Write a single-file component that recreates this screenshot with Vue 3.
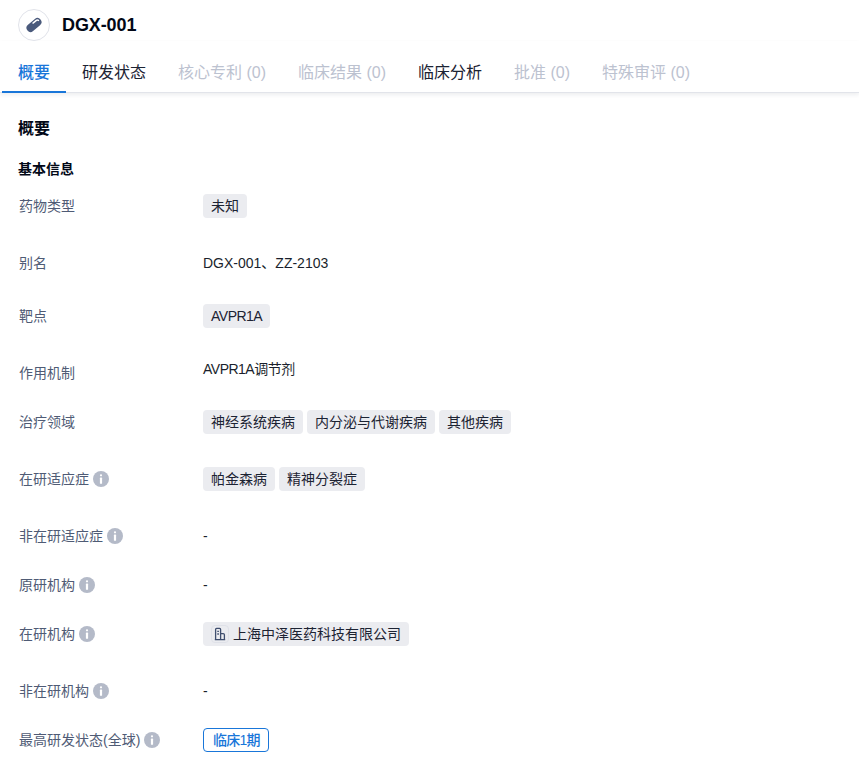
<script setup>
const tabs = [
  { label: '概要', state: 'active' },
  { label: '研发状态', state: '' },
  { label: '核心专利 (0)', state: 'off' },
  { label: '临床结果 (0)', state: 'off' },
  { label: '临床分析', state: '' },
  { label: '批准 (0)', state: 'off' },
  { label: '特殊审评 (0)', state: 'off' }
]
const rows = [
  { label: '药物类型', size: 'tall', tags: ['未知'] },
  { label: '别名', size: 'mid', text: 'DGX-001、ZZ-2103' },
  { label: '靶点', size: 'tall', tags: ['AVPR1A'], tight: true },
  { label: '作用机制', size: 'base', text: 'AVPR1A调节剂', raised: true },
  { label: '治疗领域', size: 'tall', tags: ['神经系统疾病', '内分泌与代谢疾病', '其他疾病'] },
  { label: '在研适应症', info: true, size: 'tall', tags: ['帕金森病', '精神分裂症'] },
  { label: '非在研适应症', info: true, size: 'base', text: '-' },
  { label: '原研机构', info: true, size: 'base', text: '-' },
  { label: '在研机构', info: true, size: 'tall', org: '上海中泽医药科技有限公司' },
  { label: '非在研机构', info: true, size: 'base', text: '-' },
  { label: '最高研发状态(全球)', info: true, size: 'base', status: '临床1期' }
]
</script>

<template>
  <div class="page">
    <header class="head">
      <span class="avatar">
        <svg width="20" height="20" viewBox="0 0 20 20">
          <g transform="rotate(-40 10 10)">
            <rect x="1.5" y="6" width="17" height="8" rx="4" fill="#4a5a7c" />
            <path d="M10.5 7.9h3.9a2.1 2.1 0 0 1 2 1.4" fill="none" stroke="#fff" stroke-width="1.5" stroke-linecap="round" />
          </g>
        </svg>
      </span>
      <h1 class="name">DGX-001</h1>
    </header>
    <nav class="tabs">
      <span v-for="t in tabs" :key="t.label" class="tab" :class="t.state">{{ t.label }}</span>
    </nav>
    <main class="body">
      <h2 class="title">概要</h2>
      <h3 class="sub">基本信息</h3>
      <div class="list">
        <div v-for="r in rows" :key="r.label" class="row" :class="r.size">
          <div class="label">
            <span>{{ r.label }}</span>
            <svg v-if="r.info" class="info" width="16" height="16" viewBox="0 0 16 16">
              <circle cx="8" cy="8" r="8" fill="#b4bac8" />
              <rect x="6.9" y="3.2" width="2.2" height="2.2" rx="1.1" fill="#fff" />
              <rect x="6.9" y="6.6" width="2.2" height="6.2" rx=".6" fill="#fff" />
            </svg>
          </div>
          <div class="value">
            <template v-if="r.tags">
              <span v-for="t in r.tags" :key="t" class="tag" :class="{ tight: r.tight }">{{ t }}</span>
            </template>
            <span v-else-if="r.org" class="tag org">
              <span class="org-icon">
                <svg width="12" height="14" viewBox="0 0 12 14" fill="none" stroke="#3f4e6e" stroke-width="1.3">
                  <path d="M1.6 12.6V2.4c0-.6.4-1 1-1h3c.6 0 1 .4 1 1v10.2M6.6 6.6h2.6c.7 0 1.2.5 1.2 1.2v4.8M.8 12.6h10.4M3.3 4.4h1.6M3.3 7h1.6" />
                </svg>
              </span>
              {{ r.org }}
            </span>
            <span v-else-if="r.status" class="status">{{ r.status }}</span>
            <span v-else class="plain" :class="{ raised: r.raised }">{{ r.text }}</span>
          </div>
        </div>
      </div>
    </main>
  </div>
</template>

<style>
html, body { margin: 0; background: #fff; }
</style>

<style scoped>
.page {
  width: 859px;
  height: 774px;
  overflow: hidden;
  font-family: "Liberation Sans", "Noto Sans CJK SC", sans-serif;
  color: #020817;
}
.head {
  display: flex;
  align-items: center;
  gap: 12px;
  height: 32px;
  padding: 9px 18px 0;
}
.avatar {
  width: 30px;
  height: 30px;
  border: 1px solid #e1e3ea;
  border-radius: 50%;
  display: flex;
  align-items: center;
  justify-content: center;
}
.name {
  margin: 0;
  font-size: 18px;
  line-height: 32px;
  font-weight: 700;
  letter-spacing: -.1px;
}
.tabs {
  display: flex;
  padding: 0 2px;
  height: 51px;
  border-bottom: 1px solid #e2e4ea;
  box-shadow: 0 2px 4px rgba(30, 40, 70, .08);
}
.tab {
  padding: 20px 16px 0;
  font-size: 16px;
  line-height: 24px;
  height: 32px;
  color: #1c2333;
  white-space: nowrap;
}
.tab.off { color: #bcc2d0; }
.tab.active {
  color: #1976d9;
  font-weight: 500;
  border-bottom: 2px solid #1976d9;
  height: 30px;
}
.body { padding: 24px 18px 0; }
.title {
  margin: 0;
  font-size: 16px;
  line-height: 24px;
  font-weight: 600;
}
.sub {
  margin: 16px 0 0;
  font-size: 14px;
  line-height: 24px;
  font-weight: 600;
}
.list { margin-top: 12px; }
.row { display: flex; }
.row.tall { height: 57px; }
.row.mid { height: 53px; }
.row.base { height: 49px; }
.label {
  width: 184px;
  padding-left: 1px;
  flex: none;
  display: flex;
  align-items: center;
  gap: 4px;
  height: 24px;
  font-size: 14px;
  color: #4f5b75;
  white-space: nowrap;
}
.info { flex: none; margin-top: 2px; }
.value {
  display: flex;
  gap: 4px;
  margin-top: 1px;
  font-size: 14px;
  line-height: 24px;
}
.plain { color: #1a1f2c; font-size: 14px; }
.plain.raised { margin-top: -4px; letter-spacing: -.5px; }
.tag {
  height: 24px;
  padding: 0 8px;
  background: #ebecf0;
  border-radius: 4px;
  color: #1c2333;
  font-size: 14px;
  line-height: 24px;
  white-space: nowrap;
}
.tag.tight { letter-spacing: -.5px; }
.tag.org {
  display: flex;
  align-items: center;
  gap: 4px;
}
.org-icon {
  width: 18px;
  height: 18px;
  box-sizing: border-box;
  border: 1px solid #dfe1e8;
  border-radius: 4px;
  display: flex;
  align-items: center;
  justify-content: center;
}
.status {
  height: 24px;
  box-sizing: border-box;
  padding: 0 8px 0 9px;
  border: 1px solid #1976d9;
  border-radius: 4px;
  color: #1976d9;
  font-size: 14px;
  line-height: 22px;
  font-weight: 500;
  letter-spacing: -.75px;
}
</style>
